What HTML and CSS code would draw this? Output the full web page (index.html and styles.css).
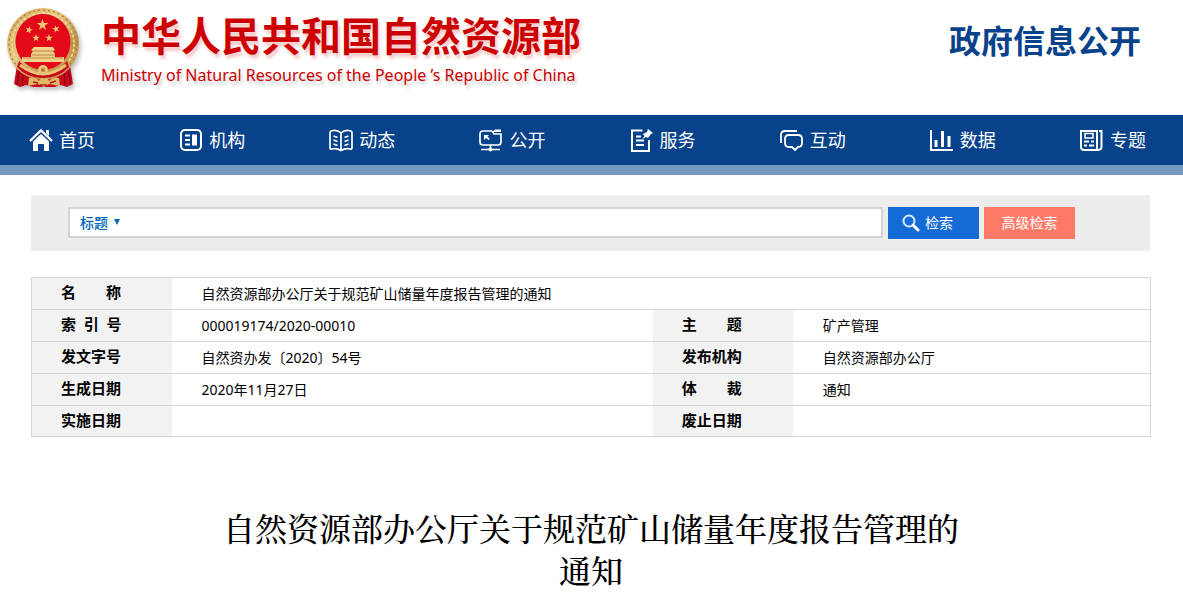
FILE: index.html
```html
<!DOCTYPE html>
<html lang="zh-CN">
<head>
<meta charset="utf-8">
<meta name="viewport" content="width=device-width, initial-scale=1">
<title>自然资源部办公厅关于规范矿山储量年度报告管理的通知</title>
<link rel="stylesheet" href="styles.css">
</head>
<body>
<header class="masthead">
  <svg class="emblem" viewBox="0 0 76 84" role="img" aria-label="国徽">
    <defs>
      <linearGradient id="gold" x1="0" y1="0" x2="1" y2="1">
        <stop offset="0" stop-color="#cfa95c"/><stop offset=".4" stop-color="#e6c783"/><stop offset=".7" stop-color="#c0924a"/><stop offset="1" stop-color="#dcb76b"/>
      </linearGradient>
      <path id="star" d="M0-6 1.4-1.9 5.7-1.9 2.2.7 3.5 4.9 0 2.3-3.5 4.9-2.2.7-5.7-1.9-1.4-1.9z"/>
    </defs>
    <path d="M11 57 8 76 14 79 20 77 27 79 48 79 55 77 61 79 67 76 64 57z" fill="#c9081c"/>
    <path d="M13 62 11 77M17 64 17 78M58 64 59 78M62 62 65 76" stroke="#8d0716" stroke-width="1.5"/>
    <circle cx="37" cy="36" r="36" fill="url(#gold)"/>
    <circle cx="37" cy="36" r="34" fill="none" stroke="#a97b30" stroke-width="1.2" stroke-dasharray="2 3"/>
    <circle cx="37" cy="36" r="31" fill="none" stroke="#f3dca2" stroke-width="1.5" stroke-dasharray="3 2"/>
    <ellipse cx="37" cy="34" rx="27.500" ry="28" fill="#e30918"/>
    <g fill="#ecc978"><use href="#star" x="36.500" y="17"/>
      <use href="#star" transform="translate(23 22) scale(.65) rotate(15)"/><use href="#star" transform="translate(50 21) scale(.65) rotate(-15)"/>
      <use href="#star" transform="translate(30 30) scale(.65)"/><use href="#star" transform="translate(43 30) scale(.65)"/></g>
    <path d="M28 39 47 39 49 42 47 43 49 46 49 49 58 49 58 54 16 54 16 49 25 49 25 46 27 43 25 42z" fill="#efd08b"/>
    <path d="M27 43H48M26 47H49M17 50H57" stroke="#ba873e" stroke-width="1"/>
    <path d="M13 53Q23 65 37 65 51 65 61 53L63 59Q53 70 37 70 21 70 11 59z" fill="#c9081c"/>
    <path d="M14 57Q26 66 37 66 48 66 60 57" fill="none" stroke="#e9c577" stroke-width="3"/>
    <circle cx="37" cy="62" r="5" fill="#e9c577"/><circle cx="37" cy="62" r="2" fill="#af7b31"/>
    <path d="M23 70Q30 69 33 73 35 68 38 71 41 68 43 73 47 69 53 70L54 78 43 76 38 79 32 76 22 78z" fill="#e0b866"/>
    <path d="M27 74 32 75M44 75 50 73M34 77 41 77" stroke="#a91b1c" stroke-width="1.5"/>
  </svg>
  <div class="brand">
    <p class="brand-cn">中华人民共和国自然资源部</p>
    <p class="brand-en" lang="en">Ministry of Natural Resources of the People ’s Republic of China</p>
  </div>
  <p class="section-name">政府信息公开</p>
</header>

<nav class="nav">
  <a href="#"><svg viewBox="0 0 24 24"><path d="M1 13 12 2.5 23 13" fill="none" stroke="#fff" stroke-width="2.4"/><path d="M17 2h3v6l-3-3zM4 13.5 12 6l8 7.500V23h-5v-7H9v7H4z" fill="#fff"/></svg>首页</a>
  <a href="#"><svg viewBox="0 0 24 24" fill="none" stroke="#fff" stroke-width="2"><rect x="2" y="2" width="20" height="20" rx="4"/><path d="M6 7.500H11M6 12H11M6 16.500H11"/><path d="M13 6.500h5v11h-5z" fill="#fff" stroke="none"/></svg>机构</a>
  <a href="#"><svg viewBox="0 0 24 24" fill="none" stroke="#fff" stroke-width="1.700"><path d="M12 5Q9 2 4 2.500Q1 2.500 1 5V20Q1 21.500 3 21Q8 20 12 22.500 16 20 21 21Q23 21.500 23 20V5Q23 2.500 20 2.500Q15 2 12 5V22"/><path d="M4.500 8 8.500 9.500M4.500 12 8.500 13.500M4.500 16 8.500 17.500M19.500 8 15.500 9.500M19.500 12 15.500 13.500M19.500 16 15.500 17.500"/></svg>动态</a>
  <a href="#"><svg viewBox="0 0 24 24" fill="none" stroke="#fff" stroke-width="1.700"><path d="M13 3H4Q1 3 1 6V14Q1 17 4 17H19Q22 17 22 14V6H15L13 3"/><path d="M14 3.500 16 1.500H22V4H14zM5 7H10L8.500 8.500 11 11 9.500 12 7 10 5 12z" fill="#fff" stroke="none"/><path d="M11.500 17V20M2 21.500H21"/><circle cx="11.500" cy="21.500" r="2" fill="#fff" stroke="none"/></svg>公开</a>
  <a href="#"><svg viewBox="0 0 24 24" fill="none" stroke="#fff" stroke-width="2"><path d="M12.500 2.500H2V23H19V12"/><path d="M6 8.500H11M6 12.500H14M6 17H14"/><path d="M18 1 23 5 21 6 18 10 16 9 12.500 11 14.500 8 13 6 17 4z" fill="#fff" stroke="none"/></svg>服务</a>
  <a href="#"><svg viewBox="0 0 24 24" fill="none" stroke="#fff" stroke-width="1.800"><path d="M1 15V7Q1 3 5 3H17"/><path d="M9 7H18Q22 7 22 11V15Q22 19 18 19L15 22 12 19H9Q5 19 5 15V11Q5 7 9 7z"/></svg>互动</a>
  <a href="#"><svg viewBox="0 0 24 24" fill="none" stroke="#fff" stroke-width="2"><path d="M1 2V22H23"/><path d="M6 12V19M12.500 3V19M19 8V19" stroke-width="3"/></svg>数据</a>
  <a href="#"><svg viewBox="0 0 24 24" fill="none" stroke="#fff" stroke-width="2"><path d="M17 22H4Q1 22 1 19V3H17V22M19 3H21.500V19Q21.500 22 17 22"/><path d="M5 5.500H13V10H5z" stroke-width="1.500"/><path d="M4 13.500H9M4 17.500H7M11 13.500H14M9 17.500H14"/></svg>专题</a>
</nav>

<main class="content">
  <form class="search">
    <div class="search-box">
      <select class="field" aria-label="检索字段"><option>标题</option></select>
      <span class="arrow" aria-hidden="true"></span>
      <input class="query" type="text" aria-label="检索内容">
    </div>
    <button class="btn btn-search" type="button"><svg viewBox="0 0 18 18" aria-hidden="true"><circle cx="7" cy="7" r="5.500" fill="none" stroke="#d9e9fb" stroke-width="2"/><path d="M11.500 11.500 16 16" stroke="#fff" stroke-width="3" stroke-linecap="round"/></svg>检索</button>
    <button class="btn btn-advanced" type="button">高级检索</button>
  </form>

  <table class="meta">
    <colgroup><col class="col-label"><col class="col-wide"><col class="col-label"><col></colgroup>
    <tbody>
      <tr><th scope="row">名　　称</th><td colspan="3">自然资源部办公厅关于规范矿山储量年度报告管理的通知</td></tr>
      <tr><th scope="row">索&nbsp;&nbsp;引&nbsp;&nbsp;号</th><td>000019174/2020-00010</td><th scope="row">主　　题</th><td>矿产管理</td></tr>
      <tr><th scope="row">发文字号</th><td>自然资办发〔2020〕54号</td><th scope="row">发布机构</th><td>自然资源部办公厅</td></tr>
      <tr><th scope="row">生成日期</th><td>2020年11月27日</td><th scope="row">体　　裁</th><td>通知</td></tr>
      <tr><th scope="row">实施日期</th><td></td><th scope="row">废止日期</th><td></td></tr>
    </tbody>
  </table>

  <h1 class="title">自然资源部办公厅关于规范矿山储量年度报告管理的通知</h1>
</main>
</body>
</html>
```

FILE: styles.css
```css
* { box-sizing: border-box; }
body {
  margin: 0;
  background: #fff;
  color: #000;
  font: 14px/20px "Noto Sans", "Noto Sans CJK SC", sans-serif;
}
p { margin: 0; }

.masthead {
  display: flex;
  align-items: flex-start;
  padding: 8px 42px 23px 6px;
}
.emblem {
  width: 76px;
  height: 84px;
  filter: drop-shadow(2px 3px 2px rgba(0, 0, 0, .25));
}
.brand {
  margin-left: 19px;
  color: #c00;
  white-space: nowrap;
  text-shadow: 2px 4px 3px rgba(204, 0, 0, .2);
}
.brand-cn { font-size: 40px; font-weight: 700; line-height: 56px; }
.brand-en {
  font-size: 16px;
  line-height: 22px;
  text-shadow: 2px 4px 3px rgba(0, 0, 0, .2);
}
.section-name {
  margin-left: auto;
  color: #07428a;
  font-size: 32px;
  font-weight: 700;
  line-height: 66px;
  white-space: nowrap;
}

.nav {
  display: flex;
  justify-content: space-between;
  padding: 0 37px 0 29px;
  background: #07428a;
  border-bottom: 10px solid #7699c1;
}
.nav a {
  display: flex;
  align-items: center;
  gap: 6px;
  color: #fff;
  font-size: 18px;
  line-height: 50px;
  text-decoration: none;
  white-space: nowrap;
}
.nav svg { width: 24px; height: 24px; }

.content { padding: 20px 32px 0 31px; }

.search {
  display: flex;
  gap: 5px;
  margin-right: 1px;
  padding: 12px 75px 12px 37px;
  background: #ededed;
}
.search-box {
  display: flex;
  flex: 1;
  align-items: center;
  height: 31px;
  padding-left: 10px;
  background: #fff;
  border: 2px solid #d4d4d4;
}
.field {
  width: 28px;
  padding: 0 0 2px;
  appearance: none;
  background: none;
  border: 0;
  color: #0068b7;
  font: 500 14px/20px "Noto Sans CJK SC", sans-serif;
}
.arrow {
  margin: 0 8px 2px 6px;
  border: 3px solid transparent;
  border-top: 6px solid #0068b7;
  border-bottom: 0;
}
.query {
  flex: 1;
  min-width: 0;
  border: 0;
  outline: 0;
  background: none;
  font: inherit;
}
.btn {
  display: flex;
  align-items: center;
  justify-content: center;
  gap: 5px;
  width: 91px;
  height: 32px;
  padding: 0;
  border: 0;
  color: #fff;
  font: inherit;
}
.btn svg { width: 18px; height: 18px; }
.btn-search {
  justify-content: flex-start;
  padding-left: 14px;
  background: #146bd5;
}
.btn-advanced { background: #ff7967; }

.meta {
  width: 100%;
  margin-top: 26px;
  border-collapse: collapse;
  table-layout: fixed;
  border: 1px solid #d6d6d6;
}
.col-label { width: 140px; }
.col-wide { width: 43%; }
.meta th, .meta td {
  height: 32px;
  padding: 0 0 0 30px;
  border-top: 1px solid #d6d6d6;
  text-align: left;
}
.meta th {
  padding: 0 0 3px 29px;
  background: #f2f2f2;
  font-size: 15px;
  font-weight: 700;
  white-space: pre;
}
.meta tr:last-child > * { height: 31px; }

.title {
  max-width: 760px;
  margin: 69px auto 0;
  font: 500 32px/42px "Noto Serif CJK SC", "Source Han Serif SC", "SimSun", "Noto Sans CJK SC", serif;
  text-align: center;
}
```
